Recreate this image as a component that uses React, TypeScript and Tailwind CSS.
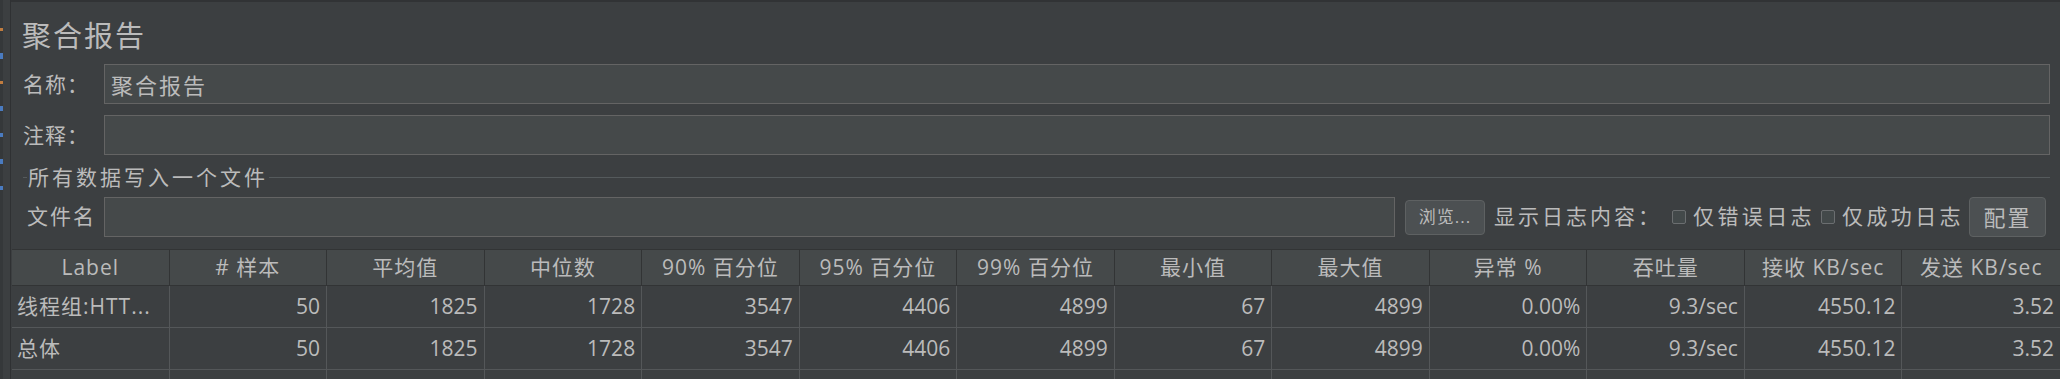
const COLS = [
  "Label",
  "# 样本",
  "平均值",
  "中位数",
  "90% 百分位",
  "95% 百分位",
  "99% 百分位",
  "最小值",
  "最大值",
  "异常 %",
  "吞吐量",
  "接收 KB/sec",
  "发送 KB/sec",
];

const ROWS = [
  ["线程组:HTT...", "50", "1825", "1728", "3547", "4406", "4899", "67", "4899", "0.00%", "9.3/sec", "4550.12", "3.52"],
  ["总体", "50", "1825", "1728", "3547", "4406", "4899", "67", "4899", "0.00%", "9.3/sec", "4550.12", "3.52"],
];

const font = "font-['Open_Sans','Noto_Sans_CJK_SC',sans-serif]";

function Checkbox() {
  return <span className="inline-block size-[14px] rounded-[2px] border border-[#6b6e70] bg-[#43494a]" />;
}

export default function App() {
  return (
    <div className={`flex h-[379px] w-[2060px] overflow-hidden bg-[#3c3f41] text-[#bbbbbb] ${font}`}>
      {/* left splitter remnant */}
      <div className="flex w-[11px] shrink-0 border-r border-[#2f3133]">
        <div className="flex w-[3px] flex-col gap-[22px] bg-[#35383a] pt-[28px]">
          <span className="h-[3px] w-[3px] bg-[#c07c3f]" />
          <span className="h-[6px] w-[3px] bg-[#4a7bc0]" />
          <span className="h-[3px] w-[3px] bg-[#c07c3f]" />
          <span className="h-[5px] w-[3px] bg-[#4a7bc0]" />
          <span className="h-[4px] w-[3px] bg-[#4a7bc0]" />
          <span className="h-[5px] w-[3px] bg-[#4a7bc0]" />
          <span className="h-[4px] w-[3px] bg-[#4a7bc0]" />
        </div>
      </div>

      <div className="flex min-w-0 flex-1 flex-col border-t-2 border-[#313335]">
        {/* title */}
        <div className="flex h-[62px] shrink-0 items-center pl-[11px] pt-[6px] text-[29px] tracking-[2px] text-[#bbbbbb]">
          聚合报告
        </div>

        {/* name */}
        <div className="flex h-[40px] shrink-0 items-center pr-[10px]">
          <span className="w-[93px] shrink-0 pl-[12px] pt-[2px] text-[21px] tracking-[1px]">名称：</span>
          <div className="flex h-full flex-1 items-center border border-[#646464] bg-[#45494a] pl-[6px] pt-[2px] text-[22px] tracking-[2px]">
            聚合报告
          </div>
        </div>

        {/* comment */}
        <div className="mt-[11px] flex h-[40px] shrink-0 items-center pr-[10px]">
          <span className="w-[93px] shrink-0 pl-[12px] pt-[2px] text-[21px] tracking-[1px]">注释：</span>
          <div className="h-full flex-1 border border-[#646464] bg-[#45494a]" />
        </div>

        {/* fieldset title */}
        <div className="mt-[8px] flex h-[28px] shrink-0 items-center pl-[12px] pr-[10px]">
          <span className="h-px w-[4px] bg-[#555a5c]" />
          <span className="px-[1px] pt-[2px] text-[21px] tracking-[3px]">所有数据写入一个文件</span>
          <span className="h-px flex-1 bg-[#555a5c]" />
        </div>

        {/* file row */}
        <div className="mt-[6px] flex h-[40px] shrink-0 items-center">
          <span className="w-[93px] shrink-0 pl-[16px] text-[21px] tracking-[2px]">文件名</span>
          <div className="h-full w-[1291px] shrink-0 border border-[#646464] bg-[#45494a]" />
          <button className="ml-[10px] h-[35px] w-[80px] shrink-0 rounded-[4px] border border-[#5e6162] bg-[#4c5052] text-[17px] tracking-[1px] text-[#bbbbbb]">
            浏览...
          </button>
          <span className="ml-[9px] shrink-0 text-[21px] tracking-[3px]">显示日志内容：</span>
          <span className="ml-[10px] flex shrink-0 items-center gap-[7px]">
            <Checkbox />
            <span className="text-[21px] tracking-[3.4px]">仅错误日志</span>
          </span>
          <span className="ml-[6px] flex shrink-0 items-center gap-[7px]">
            <Checkbox />
            <span className="text-[21px] tracking-[3.4px]">仅成功日志</span>
          </span>
          <button className="ml-[5px] h-[40px] w-[77px] shrink-0 rounded-[4px] border border-[#5e6162] bg-[#4c5052] text-[22px] tracking-[2px] text-[#bbbbbb]">
            配置
          </button>
        </div>

        {/* table */}
        <div className="ml-px mt-[12px] flex shrink-0 flex-col text-[21px]">
          <div className="grid h-[37px] grid-cols-[repeat(13,minmax(0,1fr))] border-y border-[#323435] bg-[#45494a]">
            {COLS.map((c, i) => (
              <div
                key={c}
                className={`flex items-center justify-center tracking-[1px] ${i < COLS.length - 1 ? "border-r border-[#323435]" : ""}`}
              >
                {c}
              </div>
            ))}
          </div>
          {ROWS.map((r, ri) => (
            <div key={ri} className="grid h-[42px] grid-cols-[repeat(13,minmax(0,1fr))] border-b border-[#545759]">
              {r.map((v, i) => (
                <div
                  key={i}
                  className={`flex items-center overflow-hidden whitespace-nowrap ${
                    i === 0 ? "justify-start pl-[5px] tracking-[1px]" : "justify-end pr-[6px]"
                  } ${i < r.length - 1 ? "border-r border-[#545759]" : ""}`}
                >
                  {v}
                </div>
              ))}
            </div>
          ))}
          <div className="grid h-[20px] grid-cols-[repeat(13,minmax(0,1fr))]">
            {COLS.map((c, i) => (
              <div key={c} className={i < COLS.length - 1 ? "border-r border-[#545759]" : ""} />
            ))}
          </div>
        </div>
      </div>
    </div>
  );
}
